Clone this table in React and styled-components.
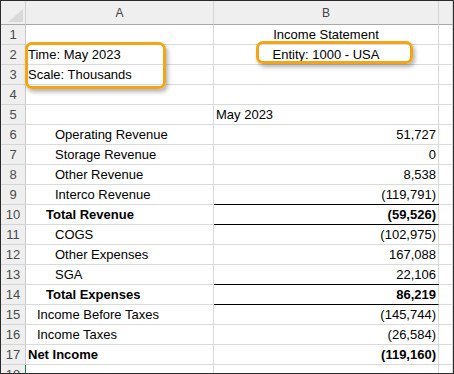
import React from "react";
import styled, { createGlobalStyle, css } from "styled-components";

const GlobalStyle = createGlobalStyle`
  html, body { margin: 0; padding: 0; background: #ffffff; }
  body { font-family: "Liberation Sans", Arial, sans-serif; }
`;

const Sheet = styled.div`
  position: relative;
  width: 454px;
  height: 374px;
  box-sizing: border-box;
  border: 1px solid #2b2b2b;
  overflow: hidden;
  background: #fff;
  display: grid;
  grid-template-columns: 25px 188px 225px 14px;
  grid-template-rows: 24px;
  grid-auto-rows: 20px;
  font-family: "Liberation Sans", Arial, sans-serif;
  font-size: 13px;
  color: #000;
`;

const Corner = styled.div`
  background: #efefef;
  border-right: 1px solid #d0d0d0;
  border-bottom: 1px solid #a9a9a9;
  display: flex;
  justify-content: flex-end;
  align-items: flex-end;
  padding: 0 2px 2px 0;
`;

const ColHeader = styled.div`
  background: #efefef;
  border-right: 1px solid #d4d4d4;
  border-bottom: 1px solid #a9a9a9;
  display: flex;
  align-items: center;
  justify-content: center;
  font-size: 12px;
  color: #444;
  padding-top: 1px;
`;

const RowHeader = styled.div`
  background: #efefef;
  border-right: 1px solid ${(p) => (p.$active ? "#217346" : "#c9c9c9")};
  border-bottom: 1px solid #d4d4d4;
  display: flex;
  align-items: flex-end;
  justify-content: center;
  padding-bottom: 2px;
  line-height: 15px;
  font-size: 13px;
  color: #4a4a4a;
`;

const Cell = styled.div`
  border-right: 1px solid #dadada;
  border-bottom: 1px solid #dadada;
  display: flex;
  align-items: flex-end;
  padding: 0 2px 2px ${(p) => 2 + (p.$indent || 0) * 9}px;
  line-height: 15px;
  white-space: nowrap;
  overflow: visible;
  justify-content: ${(p) =>
    p.$align === "right" ? "flex-end" : p.$align === "center" ? "center" : "flex-start"};
  font-weight: ${(p) => (p.$bold ? 700 : 400)};
  ${(p) =>
    p.$total &&
    css`
      border-bottom-color: #000;
      box-shadow: 0 -1px 0 #000;
    `}
`;

const Highlight = styled.div`
  position: absolute;
  left: ${(p) => p.$x}px;
  top: ${(p) => p.$y}px;
  width: ${(p) => p.$w}px;
  height: ${(p) => p.$h}px;
  box-sizing: border-box;
  border: 3px solid #f4a514;
  border-radius: 7px;
  box-shadow: 2px 3px 4px rgba(0, 0, 0, 0.3);
  pointer-events: none;
`;

const rows = [
  { n: 1, b: "Income Statement", bAlign: "center" },
  { n: 2, a: "Time: May 2023", b: "Entity: 1000 - USA", bAlign: "center" },
  { n: 3, a: "Scale: Thousands" },
  { n: 4 },
  { n: 5, b: "May 2023", bAlign: "left" },
  { n: 6, a: "Operating Revenue", indent: 3, b: "51,727" },
  { n: 7, a: "Storage Revenue", indent: 3, b: "0" },
  { n: 8, a: "Other Revenue", indent: 3, b: "8,538" },
  { n: 9, a: "Interco Revenue", indent: 3, b: "(119,791)" },
  { n: 10, a: "Total Revenue", indent: 2, b: "(59,526)", bold: true, total: true },
  { n: 11, a: "COGS", indent: 3, b: "(102,975)" },
  { n: 12, a: "Other Expenses", indent: 3, b: "167,088" },
  { n: 13, a: "SGA", indent: 3, b: "22,106" },
  { n: 14, a: "Total Expenses", indent: 2, b: "86,219", bold: true, total: true },
  { n: 15, a: "Income Before Taxes", indent: 1, b: "(145,744)" },
  { n: 16, a: "Income Taxes", indent: 1, b: "(26,584)" },
  { n: 17, a: "Net Income", indent: 0, b: "(119,160)", bold: true },
  { n: 18, active: true },
];

export default function App() {
  return (
    <>
      <GlobalStyle />
      <Sheet>
        <Corner>
          <svg width="15" height="13" viewBox="0 0 15 13">
            <polygon points="15,0 15,13 0,13" fill="#d9d9d9" />
          </svg>
        </Corner>
        <ColHeader>A</ColHeader>
        <ColHeader>B</ColHeader>
        <ColHeader />
        {rows.map((r) => (
          <React.Fragment key={r.n}>
            <RowHeader $active={r.active}>{r.n}</RowHeader>
            <Cell $indent={r.indent} $bold={r.bold}>
              {r.a}
            </Cell>
            <Cell $align={r.bAlign || "right"} $bold={r.bold} $total={r.total}>
              {r.b}
            </Cell>
            <Cell />
          </React.Fragment>
        ))}
        <Highlight $x={24} $y={41} $w={141} $h={47} />
        <Highlight $x={255} $y={40} $w={157} $h={23} />
      </Sheet>
    </>
  );
}
